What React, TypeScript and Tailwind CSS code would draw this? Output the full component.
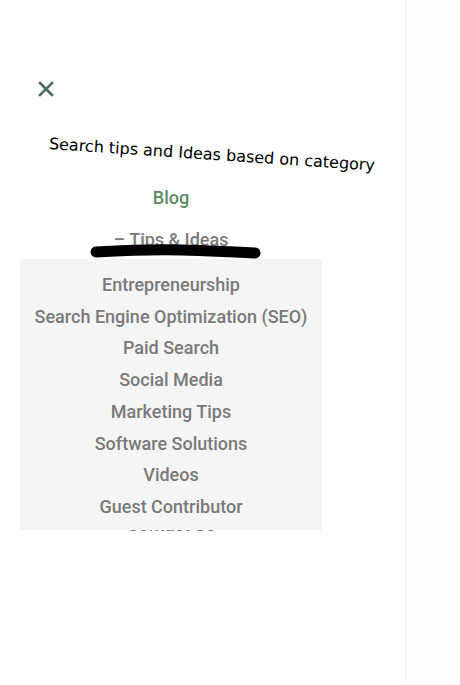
import React from 'react';

const subItems = [
  'Entrepreneurship',
  'Search Engine Optimization (SEO)',
  'Paid Search',
  'Social Media',
  'Marketing Tips',
  'Software Solutions',
  'Videos',
  'Guest Contributor',
];

const menuFont = { fontFamily: 'Roboto, "Liberation Sans", sans-serif' };

const App: React.FC = () => {
  return (
    <div className="flex h-[685px] w-[460px] overflow-hidden bg-white">
      <aside className="relative w-[406px] border-r border-[#efefef] bg-white">
        <button className="ml-[38px] mt-[81px] flex h-4 w-4 items-center justify-center text-[#4d6b58]">
          <svg width="16" height="16" viewBox="0 0 16 16" fill="none">
            <path d="M2 2L14 14M14 2L2 14" stroke="currentColor" strokeWidth="2.6" strokeLinecap="square" />
          </svg>
        </button>

        <p
          className="ml-[49px] mt-[37px] w-max origin-left rotate-[3.8deg] text-[16px] leading-5 text-black"
          style={{ fontFamily: '"DejaVu Sans", Verdana, sans-serif' }}
        >
          Search tips and Ideas based on category
        </p>

        <nav className="mt-[31px] flex w-[342px] flex-col items-center" style={menuFont}>
          <a className="text-[18px] font-medium leading-[26px] text-[#5b8a66]">Blog</a>
          <div className="relative mt-[16px]">
            <a className="text-[18px] font-medium leading-[26px] text-[#7a7a7a]">– Tips &amp; Ideas</a>
            <svg className="absolute left-[-24px] top-[16px]" width="172" height="20" viewBox="0 0 172 20" fill="none">
              <path d="M6 9 Q60 6 92 7 T165 10" stroke="#000" strokeWidth="11" strokeLinecap="round" />
            </svg>
          </div>
          <a className="mt-[259px] text-[18px] font-medium leading-[26px] text-[#7a7a7a]">Contact Us</a>
        </nav>

        <ul
          className="absolute left-[20px] top-[259px] flex h-[271px] w-[302px] flex-col items-center bg-[#f5f5f5] pt-[10px]"
          style={menuFont}
        >
          {subItems.map((item) => (
            <li key={item} className="whitespace-nowrap text-[18px] font-medium leading-[31.7px] text-[#7a7a7a]">
              {item}
            </li>
          ))}
        </ul>
      </aside>
      <div className="flex-1 bg-[#fdfdfd]" />
    </div>
  );
};

export default App;
